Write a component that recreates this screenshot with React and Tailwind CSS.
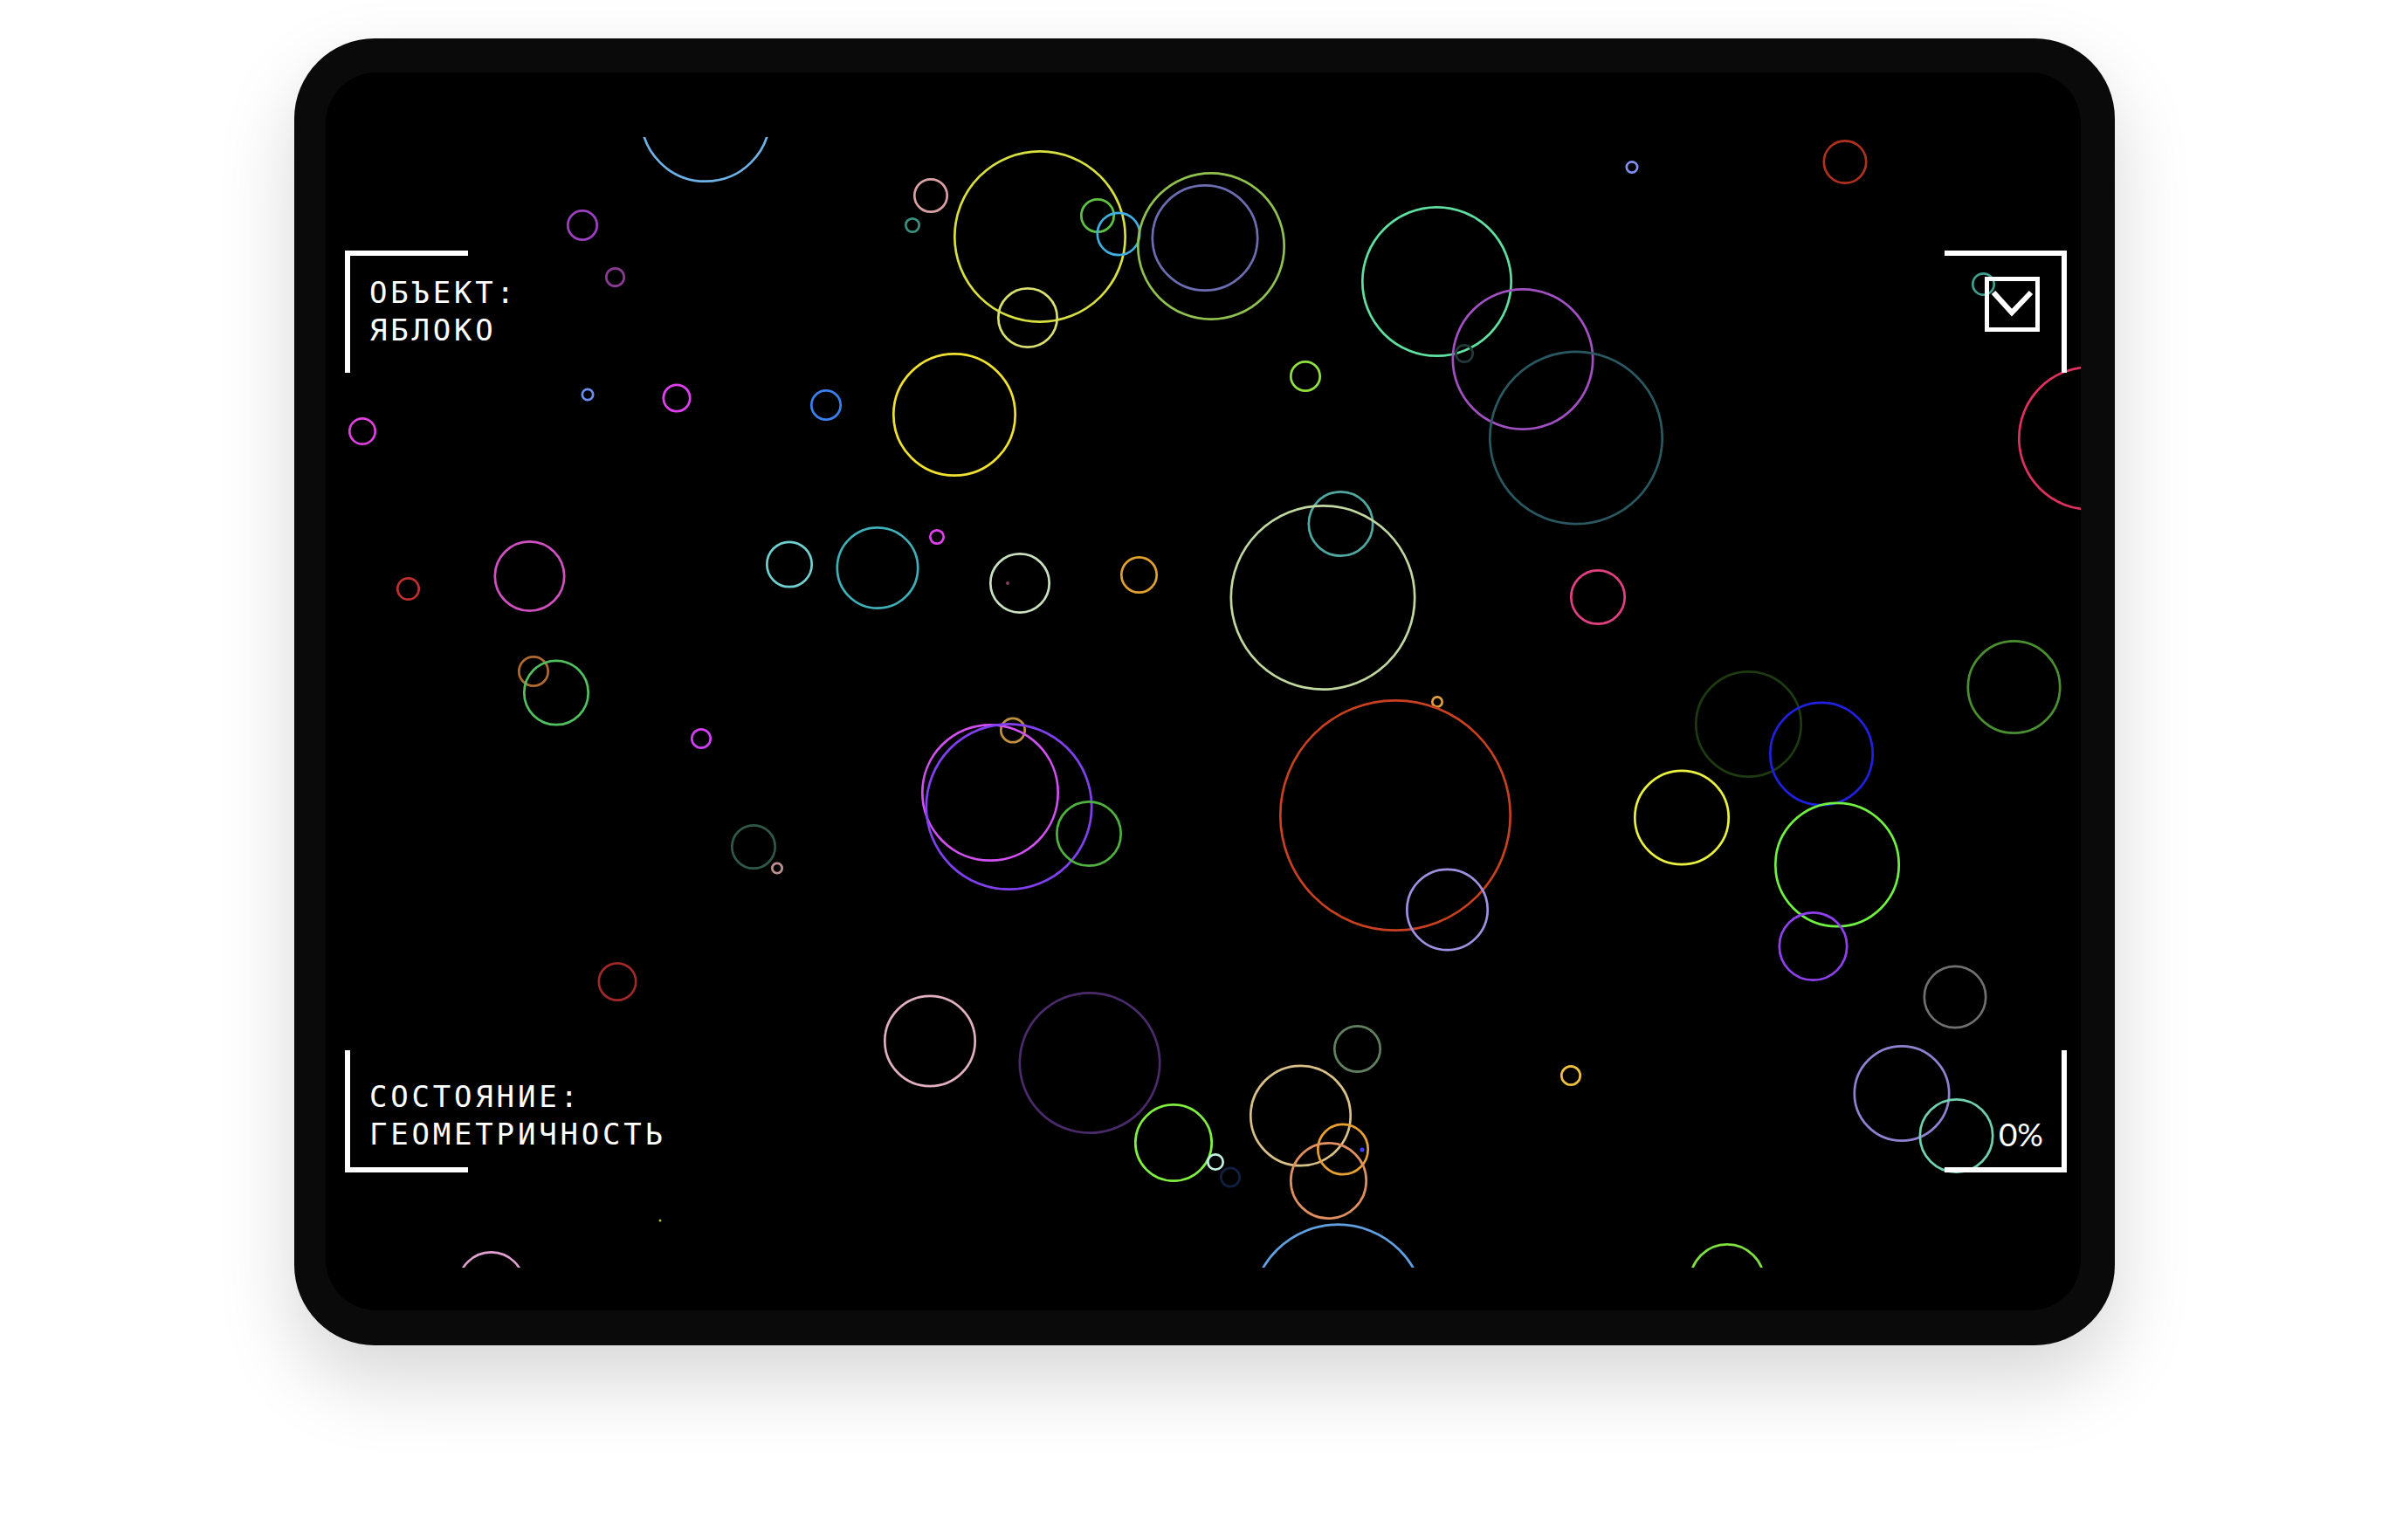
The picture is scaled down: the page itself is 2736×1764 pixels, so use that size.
// Экран «объект / состояние» на планшете: сцена из цветных колец + угловые рамки HUD

const CIRCLES = [
  [435, 51, 75, '#6fb3e6'],
  [294, 175, 18, '#9a40c0'],
  [331.5, 234.5, 11.5, '#8a3a90'],
  [300, 369, 7.5, '#6a8ff0'],
  [402, 373, 16.5, '#e040f0'],
  [42, 411, 16, '#e040e0'],
  [693, 141, 20, '#d8a0a0'],
  [672, 175, 9, '#3a9080'],
  [818, 188, 99, '#d8e040'],
  [884, 164, 20, '#60c040'],
  [908, 185, 25.5, '#40b0e0'],
  [804, 281, 35, '#d8e070'],
  [1014, 199, 85, '#90c050'],
  [1007, 189.5, 61.5, '#6c6cb0'],
  [573, 381, 18, '#3a80f0'],
  [720, 392, 71, '#f0e030'],
  [1122, 348, 18, '#90e040'],
  [1496, 108.5, 7.5, '#8090f0'],
  [1740, 102.5, 25.5, '#b03020'],
  [1272.5, 239.5, 86.5, '#60e0a0'],
  [1371, 328.5, 81.5, '#a050c0'],
  [1304, 322, 11, '#203a38'],
  [1432, 418.5, 100, '#2a5860'],
  [1898.5, 242.5, 13.5, '#40a090'],
  [2021, 419, 83, '#e03060'],
  [94.5, 591.5, 13.5, '#c03030'],
  [233.5, 577, 41, '#d050c0'],
  [531, 563.5, 27, '#70d0d0'],
  [632, 567.5, 47.5, '#40b0b8'],
  [700, 532, 9, '#e040f0'],
  [795, 585, 35, '#c8e0c0'],
  [931.5, 575.5, 21.5, '#e0a030'],
  [238, 686, 18, '#b06a30'],
  [264, 710.5, 38, '#50c060'],
  [430, 763, 12, '#d040f0'],
  [787, 753.5, 15, '#c09040'],
  [761, 825, 79, '#d050f0'],
  [782.5, 841, 96, '#8040f0'],
  [874, 872, 38, '#50b040'],
  [490, 887, 26, '#305848'],
  [517, 911.5, 7, '#c09090'],
  [334, 1041.5, 22.5, '#a02828'],
  [692, 1109.5, 53, '#e0b0c0'],
  [875, 1134.5, 81.5, '#4a2a6a'],
  [971, 1226, 45, '#80f040'],
  [189.5, 1389, 39, '#e0a0d0'],
  [1162.5, 517, 38, '#50a8a0'],
  [1142, 601.5, 106.5, '#c0d8a0'],
  [1457, 601, 32, '#e04080'],
  [1273, 721, 7, '#e0a040'],
  [1225, 851, 133, '#c84020'],
  [1629.5, 746.5, 61.5, '#1e3a10'],
  [1713, 780.5, 60, '#2020e0'],
  [1933.5, 704, 54, '#4a9030'],
  [1553, 853.5, 55, '#e8f040'],
  [1731, 907.5, 72, '#70f040'],
  [1284.5, 959, 47.5, '#a090e0'],
  [1703.5, 1001, 40, '#9040f0'],
  [1866, 1059, 36.5, '#707070'],
  [1181.5, 1118.5, 27.5, '#608060'],
  [1426, 1149, 12, '#f0c040'],
  [1116.5, 1195, 58.5, '#d8c088'],
  [1165, 1233.5, 30, '#e8a030'],
  [1148.5, 1269.5, 44.5, '#e09060'],
  [1019, 1248, 10, '#c0f0e0'],
  [1036, 1265.5, 12, '#102040'],
  [1159.5, 1419, 100.6, '#60a0e0'],
  [1605, 1384.6, 43.6, '#80e040'],
  [1805, 1169.5, 55.5, '#9080d0'],
  [1867.5, 1218, 43, '#70d0b0'],
];

const DOTS = [
  [781, 585, 2, '#804060'],
  [383, 1315, 1.5, '#a0c040'],
  [1187, 1234, 2.5, '#4040ff'],
];

const Scene = () => (
  <svg className="absolute inset-0 w-full h-full" viewBox="0 0 2010 1418" fill="none">
    <defs>
      <clipPath id="stage">
        <rect x="0" y="74" width="2010" height="1295" />
      </clipPath>
    </defs>
    <g clipPath="url(#stage)">
      {CIRCLES.map(([cx, cy, r, c], i) => (
        <circle key={i} cx={cx} cy={cy} r={r - 1.3} stroke={c} strokeWidth="2.7" />
      ))}
      {DOTS.map(([cx, cy, r, c], i) => (
        <circle key={'d' + i} cx={cx} cy={cy} r={r} fill={c} />
      ))}
    </g>
  </svg>
);

const labelCls =
  "font-['DejaVu_Sans_Mono',monospace] text-[34px] leading-[43px] tracking-[3.8px] text-white whitespace-nowrap";

const App = () => {
  return (
    <div className="h-[1764px] bg-white pt-[44px] pl-[337px]">
      {/* Корпус планшета */}
      <div className="w-[2085px] h-[1497px] rounded-[92px] bg-[#0a0a0a] pt-[39px] pb-[40px] pl-[36px] pr-[39px] shadow-[0_40px_90px_rgba(0,0,0,0.16)]">
        {/* Экран */}
        <div className="relative w-full h-full rounded-[58px] bg-black overflow-hidden">
          <Scene />

          {/* HUD */}
          <div className="absolute inset-0 flex flex-col justify-between pt-[204px] pb-[158px] pl-[22px] pr-[16px]">
            <div className="flex justify-between items-start">
              <div className="w-[141px] h-[140px] border-t-[6px] border-l-[6px] border-white pt-[21px] pl-[22px]">
                <p className={labelCls}>ОБЪЕКТ:</p>
                <p className={labelCls}>ЯБЛОКО</p>
              </div>
              <div className="w-[140px] h-[140px] border-t-[6px] border-r-[6px] border-white flex justify-end pt-[24px] pr-[25px]">
                <div className="w-[63px] h-[63px] border-[5px] border-white">
                  <svg width="53" height="53" viewBox="0 0 53 53" fill="none">
                    <path d="M5 13L26 36L48 13" stroke="#fff" strokeWidth="6" />
                  </svg>
                </div>
              </div>
            </div>

            <div className="flex justify-between items-end">
              <div className="w-[141px] h-[140px] border-b-[6px] border-l-[6px] border-white flex flex-col justify-end pb-[16px] pl-[22px]">
                <p className={labelCls}>СОСТОЯНИЕ:</p>
                <p className={labelCls}>ГЕОМЕТРИЧНОСТЬ</p>
              </div>
              <div className="w-[140px] h-[140px] border-b-[6px] border-r-[6px] border-white flex items-end justify-end pb-[20px] pr-[21px]">
                <span className="font-['Lato',sans-serif] text-[37px] leading-[37px] text-white">0%</span>
              </div>
            </div>
          </div>
        </div>
      </div>
    </div>
  );
};

export default App;
